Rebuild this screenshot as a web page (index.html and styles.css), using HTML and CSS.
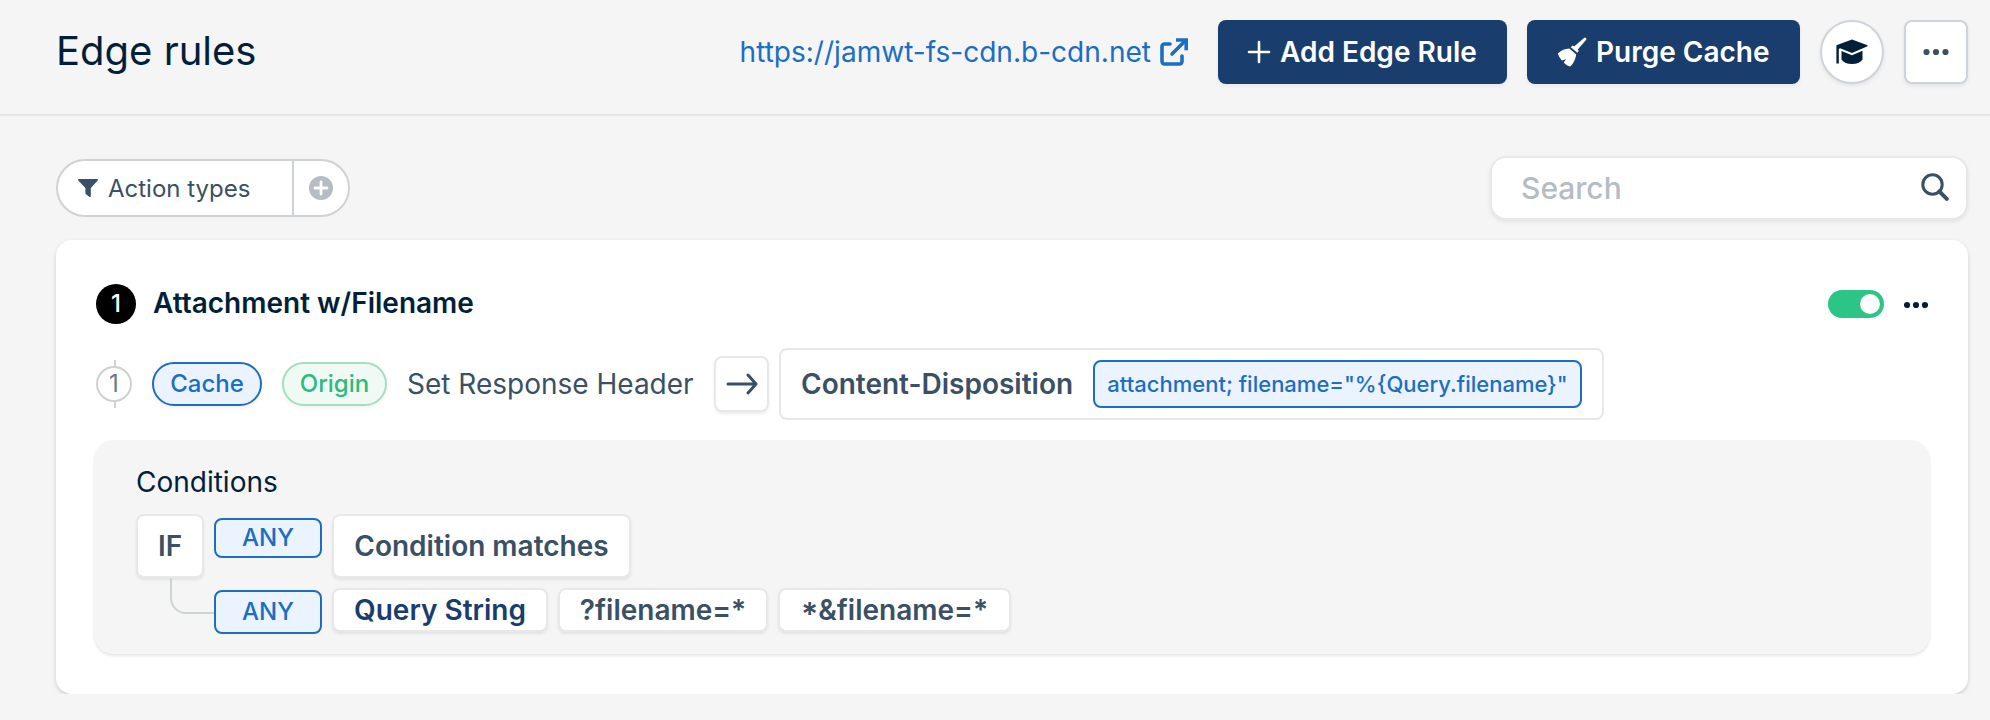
FILE: index.html
```html
<!DOCTYPE html>
<html lang="en">
<head>
	<meta charset="UTF-8">
	<title>Edge rules</title>
	<link rel="stylesheet" href="styles.css">
</head>
<body>
	<header class="header">
		<h1>Edge rules</h1>
		<a class="cdn-link" href="#">
			<span>https://jamwt-fs-cdn.b-cdn.net</span>
			<svg width="28" height="28" viewBox="0 0 28 28" fill="none" stroke="currentColor" stroke-width="3.6">
				<path d="M10 6H4.400A2.400 2.400 0 0 0 2 8.400v15.200A2.400 2.400 0 0 0 4.400 26h15.200a2.400 2.400 0 0 0 2.400-2.400V18" stroke-linecap="round"/>
				<path d="M12 16 24.500 3.500" stroke-linecap="round"/>
				<path d="M16 2h10.200v10.200"/>
			</svg>
		</a>
		<button class="btn btn-add">
			<svg width="24" height="24" viewBox="0 0 24 24" fill="none" stroke="currentColor" stroke-width="2.6" stroke-linecap="round">
				<path d="M12 2v20M2 12h20"/>
			</svg>
			<span>Add Edge Rule</span>
		</button>
		<button class="btn btn-purge">
			<svg width="30" height="30" viewBox="0 0 30 30" fill="currentColor">
				<path d="M27 1a1.400 1.400 0 0 1 2 2L20.800 12.600l1 1.400-1.600 1.800-6.400-5.600 1.800-1.600 1.800.6z"/>
				<path d="M12.400 11.400l6.800 6.200c-.6 5-2.800 9.200-6 12-2.700-.8-4.800-2.300-6.500-4.200l2.300-3.200-4.100 1.200C3 21 1.500 18.900.8 16.500c3.400-3.300 7-5 11.600-5.100z"/>
			</svg>
			<span>Purge Cache</span>
		</button>
		<button class="btn-icon btn-round">
			<svg width="32" height="26" viewBox="0 0 32 26" fill="currentColor">
				<path d="M16 .5 31.500 6.300v1L16 14 4 9.300l-1.200.6V24.500H.4V6.300z"/>
				<path d="M5.500 12 16 16.300l10.500-4.500v8.700c-2 3-6 4.500-10.500 4.500s-8.500-1.500-10.500-4.500z"/>
			</svg>
		</button>
		<button class="btn-icon">
			<svg width="26" height="8" viewBox="0 0 26 8" fill="currentColor">
				<circle cx="3.500" cy="4" r="3.100"/><circle cx="13" cy="4" r="3.100"/><circle cx="22.500" cy="4" r="3.100"/>
			</svg>
		</button>
	</header>

	<main class="content">
		<div class="toolbar">
			<div class="filter">
				<div class="filter-label">
					<svg width="20" height="18" viewBox="0 0 20 18" fill="currentColor">
						<path d="M1 0h18c.9 0 1.300.9.7 1.600L12.800 9v8c0 .9-.9 1.200-1.600.7l-3.200-2.500c-.4-.3-.6-.7-.6-1.200V9L.3 1.600C-.3.900.1 0 1 0z"/>
					</svg>
					<span>Action types</span>
				</div>
				<div class="filter-add">
					<svg width="24" height="24" viewBox="0 0 24 24">
						<circle cx="12" cy="12" r="12" fill="#b5bcc3"/>
						<path d="M12 6v12M6 12h12" stroke="#fff" stroke-width="2.800" stroke-linecap="round"/>
					</svg>
				</div>
			</div>
			<div class="search">
				<span>Search</span>
				<svg width="28" height="28" viewBox="0 0 28 28" fill="none" stroke="currentColor" stroke-width="3">
					<circle cx="11.500" cy="11.500" r="9.700"/>
					<path d="M18.300 18.300l7.500 7.500" stroke-width="4" stroke-linecap="round"/>
				</svg>
			</div>
		</div>

		<section class="rule">
			<div class="rule-head">
				<span class="rule-number">1</span>
				<h2>Attachment w/Filename</h2>
				<span class="toggle"></span>
				<svg class="rule-menu" width="24" height="8" viewBox="0 0 24 8" fill="currentColor">
					<circle cx="3" cy="4" r="3.100"/><circle cx="12" cy="4" r="3.100"/><circle cx="21" cy="4" r="3.100"/>
				</svg>
			</div>

			<div class="action">
				<div class="step"><span>1</span></div>
				<span class="tag tag-cache">Cache</span>
				<span class="tag tag-origin">Origin</span>
				<span class="action-name">Set Response Header</span>
				<span class="arrow">
					<svg width="32" height="22" viewBox="0 0 32 22" fill="none" stroke="currentColor" stroke-width="3" stroke-linecap="round" stroke-linejoin="round">
						<path d="M2 11h28M22 2l8 9-8 9"/>
					</svg>
				</span>
				<div class="action-value">
					<span class="action-key">Content-Disposition</span>
					<span class="code">attachment; filename="%{Query.filename}"</span>
				</div>
			</div>

			<div class="conditions">
				<h3>Conditions</h3>
				<div class="cond-row">
					<span class="chip chip-if">IF</span>
					<span class="any">ANY</span>
					<span class="chip chip-tall">Condition matches</span>
				</div>
				<div class="cond-row cond-sub">
					<span class="branch"></span>
					<span class="any any-tall">ANY</span>
					<span class="chip chip-query">Query String</span>
					<span class="chip chip-first">?filename=*</span>
					<span class="chip chip-second"><span class="star">*</span>&amp;filename=*</span>
				</div>
			</div>
		</section>
	</main>
</body>
</html>
```
FILE: styles.css
```css
* {
	box-sizing: border-box;
}

body {
	margin: 0;
	background: #f5f5f5;
	color: #021f3a;
	font-family: Inter, "Liberation Sans", sans-serif;
	font-size: 28px;
}

h1, h2, h3 {
	margin: 0;
}

svg {
	display: block;
	flex: none;
}

button {
	font: inherit;
	border: 0;
	padding: 0;
}

/* header */
.header {
	display: flex;
	align-items: center;
	height: 116px;
	padding: 0 22px 10px 56px;
	border-bottom: 2px solid #e6e6e6;
}

h1 {
	font-size: 40px;
	font-weight: 400;
	line-height: 48px;
	margin: 0 auto 2px 0;
}

.cdn-link {
	display: flex;
	align-items: center;
	gap: 9px;
	margin-right: 30px;
	color: #1b6ec2;
	font-size: 28.05px;
	text-decoration: none;
}

.btn {
	display: flex;
	align-items: center;
	height: 64px;
	padding: 0 30px;
	margin-right: 20px;
	border-radius: 8px;
	background: #193d6c;
	color: #fff;
	font-weight: 600;
	white-space: nowrap;
	box-shadow: 0 2px 4px rgba(0, 0, 0, .06);
}

.btn-add {
	width: 289px;
	padding-left: 29px;
	gap: 9px;
}

.btn-purge {
	width: 273px;
	gap: 9px;
}

.btn-icon {
	display: flex;
	align-items: center;
	justify-content: center;
	width: 64px;
	height: 64px;
	background: #fff;
	border: 2px solid #ced4da;
	border-radius: 8px;
	color: #3a5064;
	box-shadow: 0 2px 4px rgba(0, 0, 0, .08);
}

.btn-round {
	margin-right: 20px;
	border-radius: 50%;
	color: #021f3a;
}

/* filter + search */
.content {
	padding: 40px 22px 0 56px;
}

.toolbar {
	display: flex;
	align-items: center;
	justify-content: space-between;
	height: 64px;
	margin-bottom: 20px;
}

.filter {
	display: flex;
	width: 294px;
	height: 58px;
	background: #fff;
	border: 2px solid #cfd2d4;
	border-radius: 29px;
	color: #3a5064;
	font-size: 24px;
}

.filter-label {
	display: flex;
	align-items: center;
	gap: 10px;
	width: 236px;
	padding-left: 20px;
	border-right: 2px solid #cfd2d4;
}

.filter-add {
	flex: 1;
	display: flex;
	align-items: center;
	justify-content: center;
}

.search {
	display: flex;
	align-items: center;
	justify-content: space-between;
	width: 478px;
	height: 64px;
	padding: 0 17px 0 29px;
	background: #fff;
	border: 2px solid #e6e8ea;
	border-radius: 16px;
	box-shadow: 0 2px 4px rgba(0, 0, 0, .08);
	color: #3a5064;
	font-size: 30px;
}

.search span {
	color: #b5bcc3;
	font-weight: 500;
}

.search svg {
	margin-bottom: 2px;
}

/* rule card */
.rule {
	height: 454px;
	padding: 44px 38px 0;
	background: #fff;
	border-radius: 16px;
	box-shadow: 0 2px 4px rgba(0, 0, 0, .16);
}

.rule-head {
	display: flex;
	align-items: center;
	height: 40px;
	padding: 0 2px;
}

.rule-number {
	width: 40px;
	height: 40px;
	margin-right: 17px;
	border-radius: 50%;
	background: #000;
	color: #fff;
	font-size: 24px;
	font-weight: 500;
	line-height: 39px;
	text-align: center;
}

h2 {
	margin: 0 auto 3px 0;
	font-size: 28px;
	font-weight: 600;
	line-height: 36px;
}

.toggle {
	width: 56px;
	height: 28px;
	padding: 4px;
	border-radius: 14px;
	background: #2dc585;
}

.toggle::after {
	content: "";
	display: block;
	width: 20px;
	height: 20px;
	margin-left: auto;
	border-radius: 50%;
	background: #fff;
}

.rule-menu {
	margin: 2px 0 0 20px;
}

.action {
	display: flex;
	align-items: center;
	height: 72px;
	margin: 24px 0 20px;
	padding-left: 2px;
	color: #3a5064;
	white-space: nowrap;
}

.step {
	width: 36px;
	margin-right: 20px;
	padding: 6px 0;
	background: linear-gradient(#ced0d2, #ced0d2) 18px 0 / 2px 100% no-repeat;
}

.step span {
	display: block;
	height: 36px;
	border: 2px solid #ced0d2;
	border-radius: 50%;
	background: #fff;
	color: #6b7886;
	font-size: 24px;
	line-height: 32px;
	text-align: center;
}

.tag {
	height: 44px;
	border: 2px solid;
	border-radius: 22px;
	font-size: 24px;
	font-weight: 500;
	line-height: 40px;
	text-align: center;
	box-shadow: 0 2px 4px rgba(0, 0, 0, .06);
}

.tag-cache {
	width: 110px;
	margin-right: 20px;
	background: #eaf3ff;
	border-color: #1b6ec2;
	color: #1b6ec2;
}

.tag-origin {
	width: 105px;
	margin-right: 20px;
	background: #f0faf5;
	border-color: #a3dec2;
	color: #2dba7d;
}

.action-name {
	width: 307px;
}

.arrow {
	display: flex;
	align-items: center;
	justify-content: center;
	width: 55px;
	height: 56px;
	margin-right: 10px;
	border: 2px solid #e6e8ea;
	border-radius: 8px;
	box-shadow: 0 2px 3px rgba(0, 0, 0, .08);
}

.action-value {
	display: flex;
	align-items: center;
	width: 825px;
	height: 72px;
	padding: 0 20px;
	border: 2px solid #e6e8ea;
	border-radius: 8px;
}

.action-key {
	margin-right: auto;
	font-weight: 600;
}

.code {
	width: 489px;
	height: 48px;
	border: 2px solid #1b6ec2;
	border-radius: 8px;
	background: #ebf3fe;
	color: #1b6ec2;
	font-size: 22px;
	font-weight: 500;
	line-height: 44px;
	text-align: center;
}

/* conditions */
.conditions {
	height: 214px;
	padding: 24px 42px 0;
	background: #f5f5f5;
	border-radius: 20px;
	box-shadow: 0 2px 3px rgba(0, 0, 0, .1);
}

h3 {
	font-size: 28px;
	font-weight: 400;
	line-height: 36px;
	margin-bottom: 14px;
}

.cond-row {
	display: flex;
	gap: 10px;
	color: #3a5064;
	font-weight: 600;
}

.cond-sub {
	margin-top: 10px;
}

.chip {
	height: 44px;
	border: 2px solid #e6e8ea;
	border-radius: 8px;
	background: #fff;
	line-height: 41px;
	text-align: center;
	box-shadow: 0 2px 3px rgba(0, 0, 0, .08);
}

.chip-if,
.chip-tall {
	height: 64px;
	line-height: 60px;
}

.chip-if {
	width: 68px;
}

.chip-tall {
	width: 299px;
}

.chip-query {
	width: 216px;
	color: #193d6c;
}

.chip-first {
	width: 210px;
}

.chip-second {
	width: 233px;
}

/* leading wildcard sits on the x-height */
.star {
	font-size: 32px;
	line-height: 0;
	vertical-align: -6px;
}

.any {
	width: 108px;
	height: 40px;
	margin-top: 4px;
	border: 2px solid #1b6ec2;
	border-radius: 8px;
	background: #ebf3fe;
	color: #1b6ec2;
	font-size: 24px;
	font-weight: 500;
	line-height: 35px;
	text-align: center;
}

.any-tall {
	height: 44px;
	margin-top: 2px;
	line-height: 39px;
}

.branch {
	width: 44px;
	height: 36px;
	margin: -10px -10px 0 34px;
	border-left: 2px solid #ced4d6;
	border-bottom: 2px solid #ced4d6;
	border-bottom-left-radius: 16px;
}
```
